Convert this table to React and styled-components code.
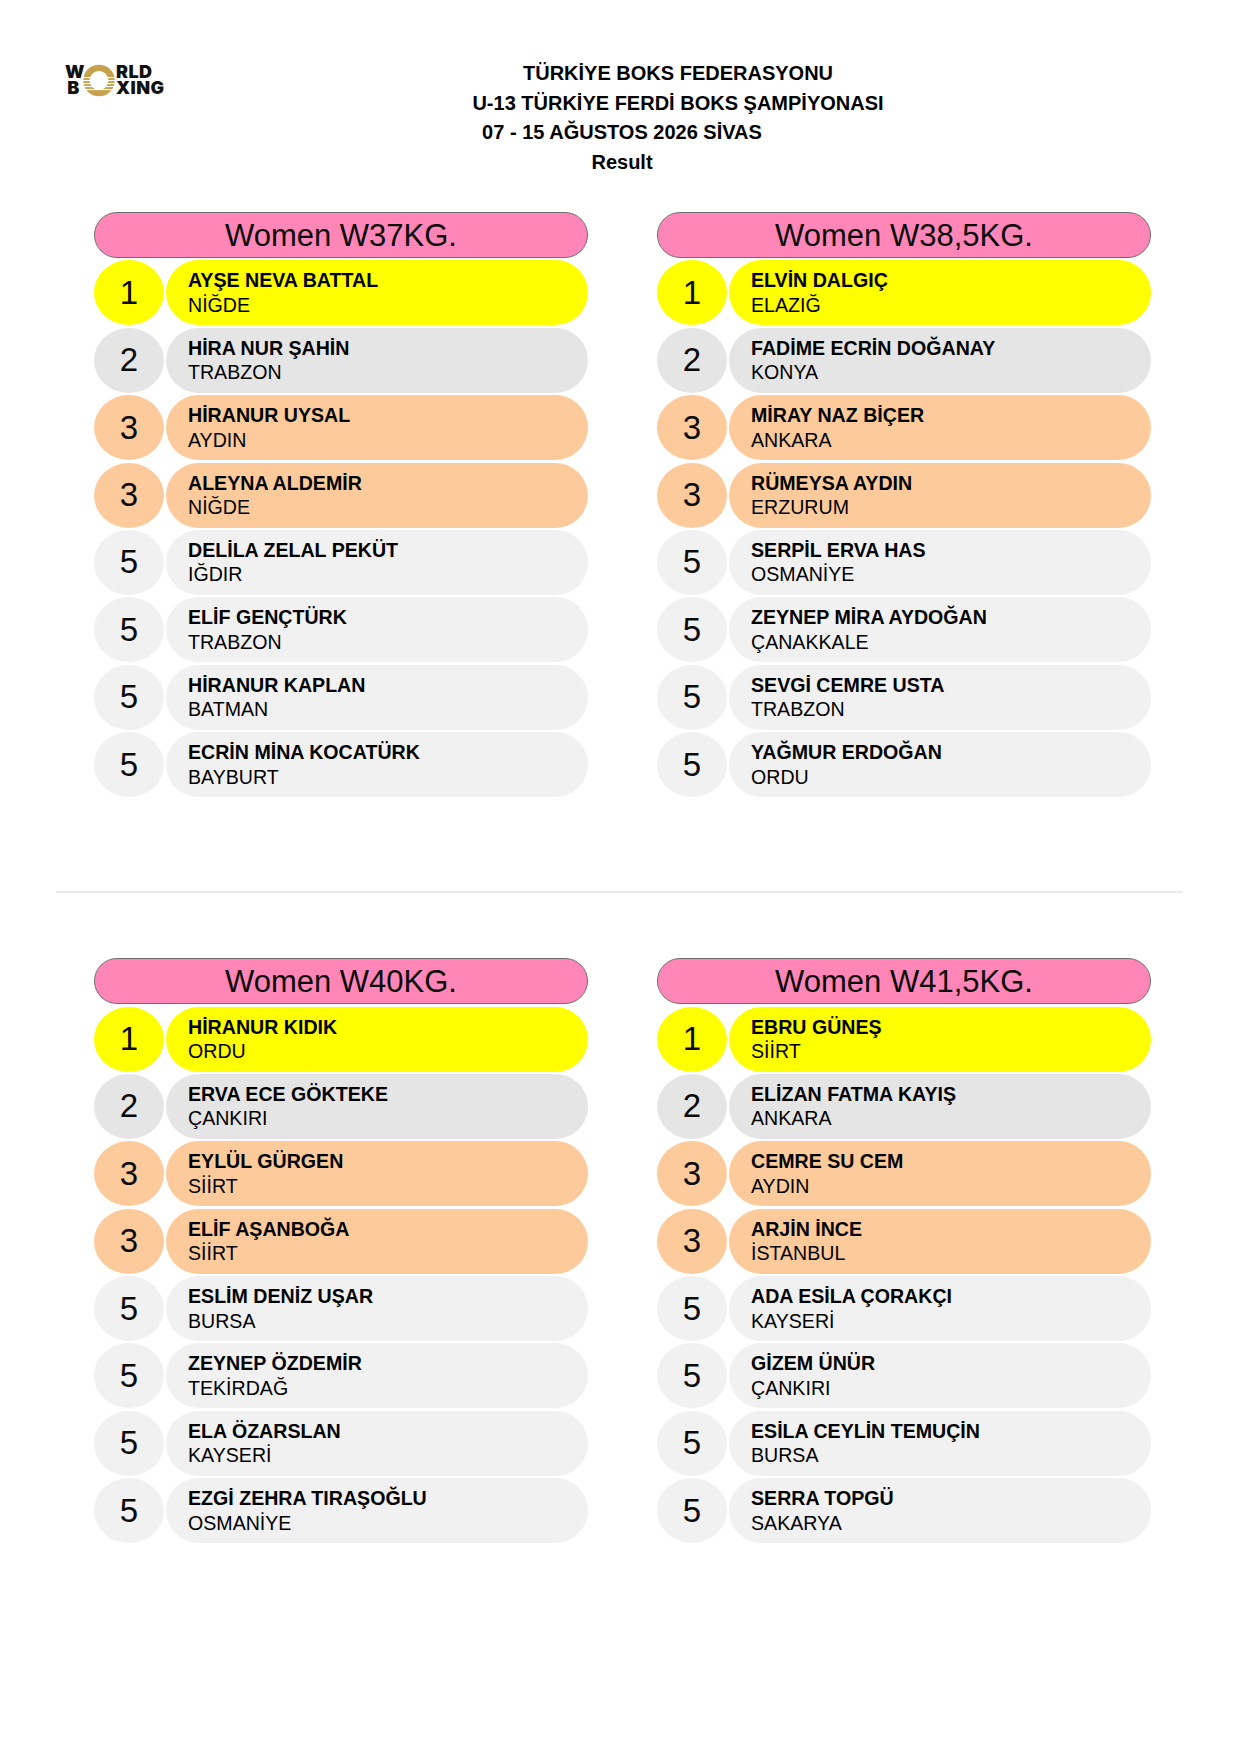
import React from 'react';
import styled, { createGlobalStyle } from 'styled-components';

const GlobalStyle = createGlobalStyle`
    body {
        margin: 0;
        background: #ffffff;
        color: #000000;
        font-family: "Liberation Sans", Arial, sans-serif;
    }
`;

const rankColors = {
    1: '#ffff00',
    2: '#e5e5e5',
    3: '#fdcb9b',
    5: '#f1f1f1',
};

const categories = [
    {
        title: 'Women W37KG.',
        rows: [
            [1, 'AYŞE NEVA BATTAL', 'NİĞDE'],
            [2, 'HİRA NUR ŞAHİN', 'TRABZON'],
            [3, 'HİRANUR UYSAL', 'AYDIN'],
            [3, 'ALEYNA ALDEMİR', 'NİĞDE'],
            [5, 'DELİLA ZELAL PEKÜT', 'IĞDIR'],
            [5, 'ELİF GENÇTÜRK', 'TRABZON'],
            [5, 'HİRANUR KAPLAN', 'BATMAN'],
            [5, 'ECRİN MİNA KOCATÜRK', 'BAYBURT'],
        ],
    },
    {
        title: 'Women W38,5KG.',
        rows: [
            [1, 'ELVİN DALGIÇ', 'ELAZIĞ'],
            [2, 'FADİME ECRİN DOĞANAY', 'KONYA'],
            [3, 'MİRAY NAZ BİÇER', 'ANKARA'],
            [3, 'RÜMEYSA AYDIN', 'ERZURUM'],
            [5, 'SERPİL ERVA HAS', 'OSMANİYE'],
            [5, 'ZEYNEP MİRA AYDOĞAN', 'ÇANAKKALE'],
            [5, 'SEVGİ CEMRE USTA', 'TRABZON'],
            [5, 'YAĞMUR ERDOĞAN', 'ORDU'],
        ],
    },
    {
        title: 'Women W40KG.',
        rows: [
            [1, 'HİRANUR KIDIK', 'ORDU'],
            [2, 'ERVA ECE GÖKTEKE', 'ÇANKIRI'],
            [3, 'EYLÜL GÜRGEN', 'SİİRT'],
            [3, 'ELİF AŞANBOĞA', 'SİİRT'],
            [5, 'ESLİM DENİZ UŞAR', 'BURSA'],
            [5, 'ZEYNEP ÖZDEMİR', 'TEKİRDAĞ'],
            [5, 'ELA ÖZARSLAN', 'KAYSERİ'],
            [5, 'EZGİ ZEHRA TIRAŞOĞLU', 'OSMANİYE'],
        ],
    },
    {
        title: 'Women W41,5KG.',
        rows: [
            [1, 'EBRU GÜNEŞ', 'SİİRT'],
            [2, 'ELİZAN FATMA KAYIŞ', 'ANKARA'],
            [3, 'CEMRE SU CEM', 'AYDIN'],
            [3, 'ARJİN İNCE', 'İSTANBUL'],
            [5, 'ADA ESİLA ÇORAKÇI', 'KAYSERİ'],
            [5, 'GİZEM ÜNÜR', 'ÇANKIRI'],
            [5, 'ESİLA CEYLİN TEMUÇİN', 'BURSA'],
            [5, 'SERRA TOPGÜ', 'SAKARYA'],
        ],
    },
];

const Page = styled.div`
    width: 1241px;
    min-height: 1755px;
    box-sizing: border-box;
    padding-top: 59px;
`;

const TopBar = styled.header`
    display: flex;
    align-items: flex-start;
`;

const LogoWrap = styled.div`
    width: 200px;
    flex: none;
    box-sizing: border-box;
    padding: 5px 0 0 65px;
`;

const Logo = styled.div`
    display: grid;
    grid-template-columns: 17px 32px auto;
    grid-template-rows: 16px 16px;
    column-gap: 1px;
    align-items: center;
`;

const LogoLetters = styled.span`
    grid-column: ${(p) => p.$col};
    grid-row: ${(p) => p.$row};
    font-family: Inter, "DejaVu Sans", sans-serif;
    font-weight: 900;
    font-size: 18px;
    line-height: 16px;
    letter-spacing: 0.4px;
    text-align: ${(p) => (p.$col === 1 ? 'center' : 'left')};
    color: #111111;
`;

const Ring = styled.svg`
    grid-column: 2;
    grid-row: 1 / span 2;
    width: 32px;
    height: 33px;
    align-self: center;
`;

const TitleBlock = styled.div`
    flex: 1;
    display: flex;
    flex-direction: column;
`;

const TitleLine = styled.div`
    font-weight: bold;
    font-size: 20px;
    line-height: 29.5px;
    text-align: center;
    padding-right: ${(p) => p.$shift}px;
`;

const Section = styled.section`
    display: grid;
    grid-template-columns: 494px 494px;
    column-gap: 69px;
    padding-left: 94px;
    margin-top: ${(p) => p.$top}px;
`;

const Panel = styled.div`
    display: flex;
    flex-direction: column;
    gap: 2.4px;
`;

const PanelHeader = styled.div`
    height: 46px;
    box-sizing: border-box;
    border: 1.5px solid #6f6f6f;
    border-radius: 23px;
    background: #ff86b6;
    display: flex;
    align-items: center;
    justify-content: center;
    font-size: 31px;
    line-height: 1;
    color: #0a0a0a;
`;

const Row = styled.div`
    display: flex;
    height: 65px;
    gap: 2px;
`;

const RankBadge = styled.div`
    width: 70px;
    flex: none;
    border-radius: 50%;
    background: ${(p) => rankColors[p.$rank]};
    display: flex;
    align-items: center;
    justify-content: center;
    font-size: 33px;
    color: #0a0a0a;
`;

const Bar = styled.div`
    flex: 1;
    border-radius: 32.5px;
    background: ${(p) => rankColors[p.$rank]};
    padding-left: 22px;
    display: flex;
    flex-direction: column;
    justify-content: center;
`;

const Name = styled.div`
    font-weight: bold;
    font-size: 19.6px;
    line-height: 24.5px;
`;

const City = styled.div`
    font-size: 19.6px;
    line-height: 24.5px;
`;

const Divider = styled.hr`
    border: none;
    height: 2px;
    width: 1127px;
    background: #ececec;
    margin: 94px 0 65px 56px;
`;

const WorldBoxingLogo = () => (
    <Logo>
        <LogoLetters $col={1} $row={1}>W</LogoLetters>
        <Ring viewBox="0 0 32 33">
            <circle cx="16" cy="16.5" r="12.6" fill="none" stroke="#c6a24f" strokeWidth="6.4" />
            {[13, 16, 19, 22, 25].map((y) => (
                <rect key={y} x="0" y={y} width="32" height="1.1" fill="#ffffff" />
            ))}
        </Ring>
        <LogoLetters $col={3} $row={1}>RLD</LogoLetters>
        <LogoLetters $col={1} $row={2}>B</LogoLetters>
        <LogoLetters $col={3} $row={2}>XING</LogoLetters>
    </Logo>
);

const CategoryPanel = ({ title, rows }) => (
    <Panel>
        <PanelHeader>{title}</PanelHeader>
        {rows.map(([rank, name, city]) => (
            <Row key={name}>
                <RankBadge $rank={rank}>{rank}</RankBadge>
                <Bar $rank={rank}>
                    <Name>{name}</Name>
                    <City>{city}</City>
                </Bar>
            </Row>
        ))}
    </Panel>
);

const App = () => {
    return (
        <>
            <GlobalStyle />
            <Page>
                <TopBar>
                    <LogoWrap>
                        <WorldBoxingLogo />
                    </LogoWrap>
                    <TitleBlock>
                        <TitleLine $shift={85}>TÜRKİYE BOKS FEDERASYONU</TitleLine>
                        <TitleLine $shift={85}>U-13 TÜRKİYE FERDİ BOKS ŞAMPİYONASI</TitleLine>
                        <TitleLine $shift={197}>07 - 15 AĞUSTOS 2026 SİVAS</TitleLine>
                        <TitleLine $shift={197}>Result</TitleLine>
                    </TitleBlock>
                </TopBar>
                <Section $top={35}>
                    <CategoryPanel {...categories[0]} />
                    <CategoryPanel {...categories[1]} />
                </Section>
                <Divider />
                <Section $top={0}>
                    <CategoryPanel {...categories[2]} />
                    <CategoryPanel {...categories[3]} />
                </Section>
            </Page>
        </>
    );
};

export default App;
